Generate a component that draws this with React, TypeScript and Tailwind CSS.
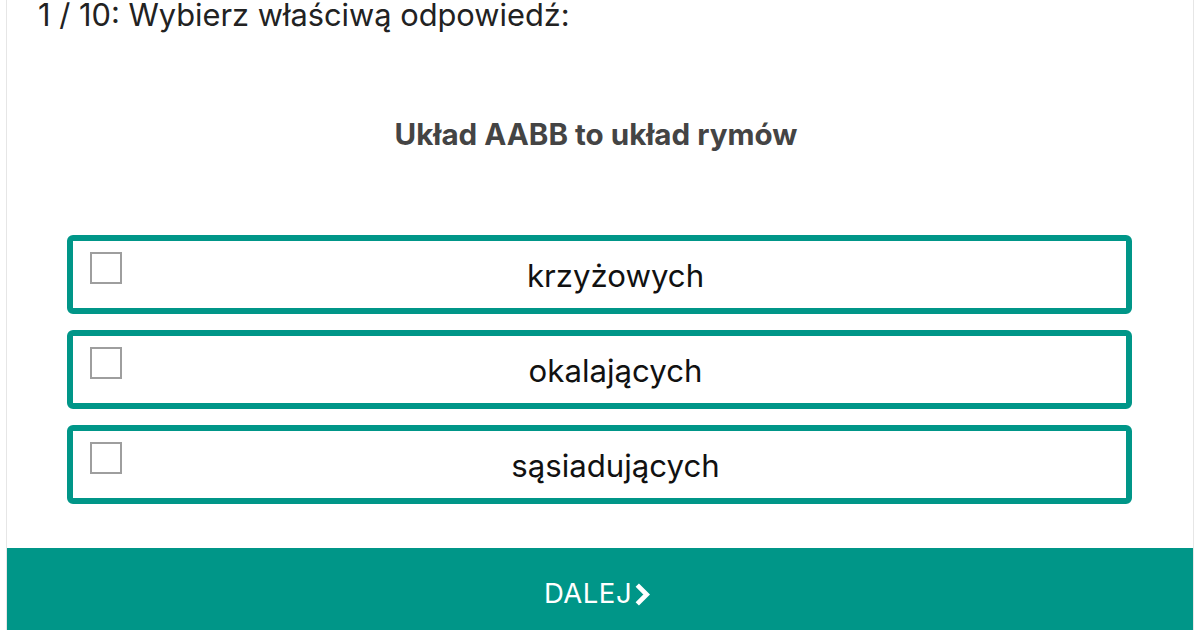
import React from "react";

const options = ["krzyżowych", "okalających", "sąsiadujących"];

export default function App() {
  return (
    <div className="w-[1200px] h-[630px] overflow-hidden bg-white" style={{ fontFamily: "Inter, 'Noto Sans', sans-serif" }}>
      <div className="mx-[6px] h-full border-x border-[#e6e6e6] flex flex-col">
        <div className="pl-[31px] h-[30px] text-[30.8px] leading-[30px] text-[#222]">1 / 10: Wybierz właściwą odpowiedź:</div>
        <div className="mt-[84px] pr-[8px] text-center text-[29.6px] font-bold text-[#444] leading-[40px]">Układ AABB to układ rymów</div>
        <div className="mt-[81px] flex flex-col gap-[16px] pl-[60px] pr-[61px]">
          {options.map((o) => (
            <div key={o} className="relative h-[79px] border-[6px] border-[#009688] rounded-[6px] flex items-center justify-center pl-[32px]">
              <div className="absolute left-[17px] top-[11px] w-[32px] h-[32px] border-[2px] border-[#9e9e9e]" />
              <span className="text-[31.2px] text-[#111] mt-[4px]">{o}</span>
            </div>
          ))}
        </div>
        <div className="mt-auto h-[82px] bg-[#009688] flex items-center justify-center text-white text-[27.5px] tracking-[0.5px] pt-[10px] pr-[5px]">
          <span>DALEJ</span>
          <svg width="17" height="23" viewBox="0 0 16 22" className="ml-[2px]">
            <path d="M3 2 L12 11 L3 20" fill="none" stroke="white" strokeWidth="4.5" strokeLinejoin="miter" />
          </svg>
        </div>
      </div>
    </div>
  );
}
